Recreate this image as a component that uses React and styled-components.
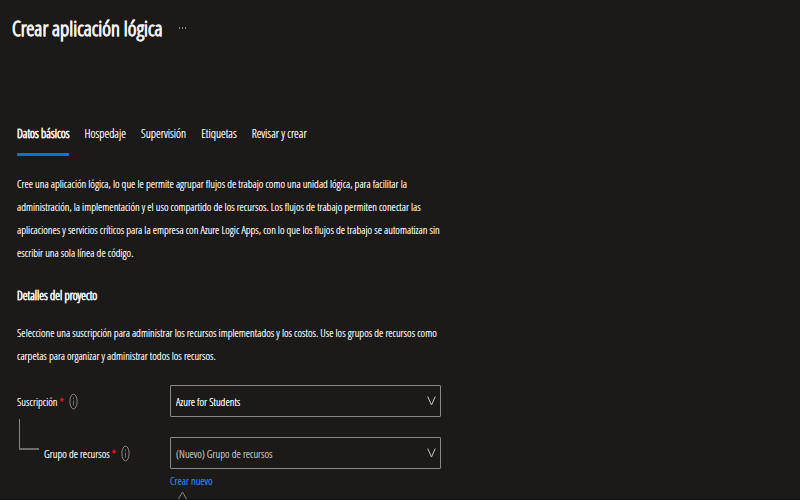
import React from "react";
import styled, { createGlobalStyle } from "styled-components";

const GlobalStyle = createGlobalStyle`
  * { box-sizing: border-box; }
  body {
    margin: 0;
    background: #1b1a19;
    color: #f3f2f1;
    font-family: "Open Sans Condensed Light", "Roboto Condensed", "Noto Sans", sans-serif;
    font-size: 11px;
    line-height: 23px;
    text-shadow: 0 0 0 currentColor;
  }
  h1, h2, p { margin: 0; }
  button, select { text-shadow: inherit; }
`;

const Page = styled.div`
  min-height: 100vh;
  display: flex;
  flex-direction: column;
  border-bottom: 1px solid #141312;
`;

const Header = styled.header`
  display: flex;
  align-items: center;
  gap: 16px;
  height: 56px;
  padding: 0 12px;
`;

const Title = styled.h1`
  font-size: 21px;
  line-height: 32px;
  font-weight: 700;
`;

const MoreButton = styled.button`
  display: flex;
  padding: 0;
  border: 0;
  background: none;
  color: #8a8886;
`;

const Tabs = styled.nav`
  display: flex;
  gap: 15px;
  margin-top: 66px;
  padding: 0 17px;
`;

const Tab = styled.button`
  height: 34px;
  padding: 0 0 8px;
  border: 0;
  border-bottom: 3px solid ${(p) => (p.$active ? "#0078d4" : "transparent")};
  background: none;
  color: inherit;
  font: inherit;
  font-size: 12px;
  font-weight: ${(p) => (p.$active ? 700 : 400)};
  white-space: nowrap;
`;

const Content = styled.main`
  padding: 16px 17px 0;
`;

const Paragraph = styled.p`
  white-space: nowrap;
`;

const SectionTitle = styled.h2`
  margin: 20px 0 14px;
  font-size: 12px;
  font-weight: 700;
`;

const Form = styled.form`
  display: grid;
  grid-template-columns: 153px minmax(0, 271px);
  row-gap: 20px;
  margin-top: 18px;
`;

const LabelCell = styled.div`
  display: flex;
  align-items: center;
  gap: 5px;
  height: 32px;
  padding-left: ${(p) => (p.$nested ? 27 : 0)}px;
  position: relative;
  white-space: nowrap;
`;

const Required = styled.span`
  color: #e00b1c;
  margin-left: 2px;
  font-weight: 700;
`;

const Connector = styled.span`
  position: absolute;
  left: 2px;
  bottom: 19px;
  width: 20px;
  height: 31px;
  border-left: 1px solid #8a8886;
  border-bottom: 2px solid #6e6c6a;
`;

const SelectBox = styled.div`
  display: grid;
  align-items: center;
  height: 32px;

  > * { grid-area: 1 / 1; }
  > svg { justify-self: end; margin-right: 5px; pointer-events: none; }
`;

const Select = styled.select`
  appearance: none;
  width: 100%;
  height: 32px;
  padding: 0 20px 0 5px;
  border: 1px solid #8a8886;
  border-radius: 1px;
  background: #1b1a19;
  color: ${(p) => (p.$muted ? "#c0bebc" : "#ffffff")};
  font: inherit;
`;

const CreateLink = styled.a`
  display: block;
  width: max-content;
  color: #2b88f0;
  text-decoration: none;
`;

const CalloutTip = styled.svg`
  display: block;
  margin: -1px 0 0 8px;
`;

const Info = () => (
  <svg width="9" height="17" viewBox="0 0 9 17" fill="none" aria-label="Información">
    <ellipse cx="4.5" cy="8.5" rx="3.6" ry="7.4" stroke="#8a8886" />
    <path d="M4.5 7.5v5M4.5 4.5v1.5" stroke="#6e6c6a" />
  </svg>
);

const Chevron = () => (
  <svg width="9" height="12" viewBox="0 0 9 12" fill="none" aria-hidden="true">
    <path d="M.7 1.5 4.5 10 8.3 1.5" stroke="#c8c6c4" />
  </svg>
);

const tabs = ["Datos básicos", "Hospedaje", "Supervisión", "Etiquetas", "Revisar y crear"];

export default function App() {
  return (
    <Page>
      <GlobalStyle />
      <Header>
        <Title>Crear aplicación lógica</Title>
        <MoreButton aria-label="Más opciones">
          <svg width="8" height="4" viewBox="0 0 8 4" fill="currentColor" aria-hidden="true">
            <path d="M0 1h1v2H0zM3 1h1v2H3zM6 1h1v2H6z" />
          </svg>
        </MoreButton>
      </Header>
      <Tabs>
        {tabs.map((label, i) => (
          <Tab key={label} type="button" $active={i === 0}>{label}</Tab>
        ))}
      </Tabs>
      <Content>
        <Paragraph>
          Cree una aplicación lógica, lo que le permite agrupar flujos de trabajo como una unidad lógica, para facilitar la<br />
          administración, la implementación y el uso compartido de los recursos. Los flujos de trabajo permiten conectar las<br />
          aplicaciones y servicios críticos para la empresa con Azure Logic Apps, con lo que los flujos de trabajo se automatizan sin<br />
          escribir una sola línea de código.
        </Paragraph>
        <SectionTitle>Detalles del proyecto</SectionTitle>
        <Paragraph>
          Seleccione una suscripción para administrar los recursos implementados y los costos. Use los grupos de recursos como<br />
          carpetas para organizar y administrar todos los recursos.
        </Paragraph>
        <Form>
          <LabelCell>
            <label htmlFor="subscription">Suscripción<Required>*</Required></label>
            <Info />
          </LabelCell>
          <SelectBox>
            <Select id="subscription"><option>Azure for Students</option></Select>
            <Chevron />
          </SelectBox>
          <LabelCell $nested>
            <Connector />
            <label htmlFor="group">Grupo de recursos<Required>*</Required></label>
            <Info />
          </LabelCell>
          <div>
            <SelectBox>
              <Select id="group" $muted><option>(Nuevo) Grupo de recursos</option></Select>
              <Chevron />
            </SelectBox>
            <CreateLink href="#nuevo">Crear nuevo</CreateLink>
            <CalloutTip width="9" height="8" viewBox="0 0 9 8" fill="none" aria-hidden="true">
              <path d="M.5 8 4.5 1 8.5 8" stroke="#8a8886" />
            </CalloutTip>
          </div>
        </Form>
      </Content>
    </Page>
  );
}
